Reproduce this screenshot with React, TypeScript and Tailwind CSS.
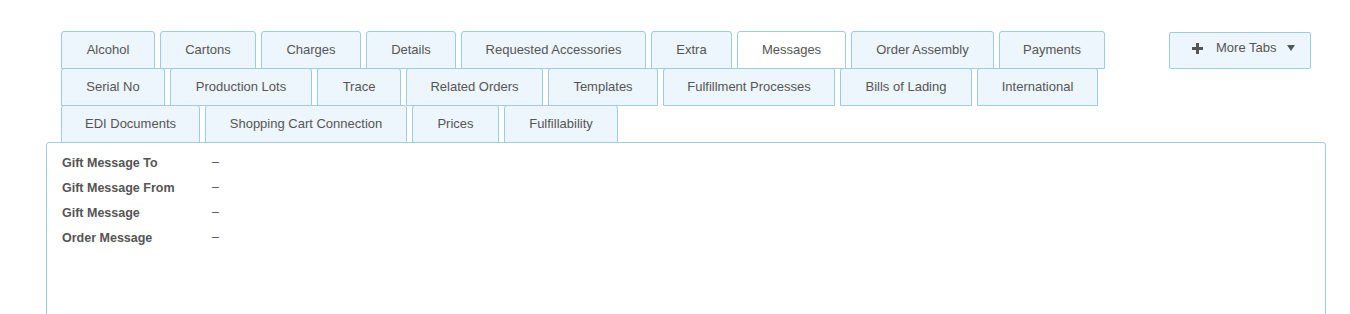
const rows: { label: string; w: string; active?: boolean }[] = [
  { label: "Alcohol", w: "w-[94px]" },
  { label: "Cartons", w: "w-[96px]" },
  { label: "Charges", w: "w-[100px]" },
  { label: "Details", w: "w-[90px]" },
  { label: "Requested Accessories", w: "w-[185px]" },
  { label: "Extra", w: "w-[81px]" },
  { label: "Messages", w: "w-[109px]", active: true },
  { label: "Order Assembly", w: "w-[143px]" },
  { label: "Payments", w: "w-[106px]" },
  { label: "Serial No", w: "w-[104px]" },
  { label: "Production Lots", w: "w-[142px]" },
  { label: "Trace", w: "w-[84px]" },
  { label: "Related Orders", w: "w-[137px]" },
  { label: "Templates", w: "w-[110px]" },
  { label: "Fulfillment Processes", w: "w-[172px]" },
  { label: "Bills of Lading", w: "w-[132px]" },
  { label: "International", w: "w-[121px]" },
  { label: "EDI Documents", w: "w-[139px]" },
  { label: "Shopping Cart Connection", w: "w-[202px]" },
  { label: "Prices", w: "w-[87px]" },
  { label: "Fulfillability", w: "w-[114px]" },
];

const fields = ["Gift Message To", "Gift Message From", "Gift Message", "Order Message"];

const App = () => {
  return (
    <div
      className="w-[1350px] h-[314px] overflow-hidden bg-white pl-[46px] pr-[24px] pt-[31px] text-[#555]"
      style={{ fontFamily: '"Liberation Sans", Arial, sans-serif' }}
    >
      <div className="flex items-start px-[15px]">
        <div className="flex flex-1 flex-wrap gap-x-[5px]">
          {rows.map((t) => (
            <div
              key={t.label}
              className={`${t.w} h-[38px] -mb-px flex items-center justify-center rounded-t-[3px] border border-[#9dcbe8] text-[13px] ${
                t.active ? "bg-white" : "bg-[#edf5fd]"
              }`}
            >
              {t.label}
            </div>
          ))}
        </div>
        <button className="mt-px w-[142px] h-[37px] flex items-start pt-[7px] pl-[22px] border border-[#9dcbe8] bg-[#edf5fd] rounded-[2px] text-[13px] text-[#555]">
          <svg width="11" height="11" viewBox="0 0 11 11" className="mt-[3px]">
            <rect x="4" y="0" width="3" height="11" fill="#555" />
            <rect x="0" y="4" width="11" height="3" fill="#555" />
          </svg>
          <span className="ml-[13px] leading-4">More Tabs</span>
          <svg width="8" height="6" viewBox="0 0 8 6" className="ml-[11px] mt-[5px]">
            <path d="M0 0 H8 L4 6 Z" fill="#555" />
          </svg>
        </button>
      </div>
      <div className="h-[200px] rounded-t-[3px] border border-[#9dcbe8] bg-white pl-[15px] pt-[8px]">
        {fields.map((f) => (
          <div key={f} className="h-[25px] flex items-center text-[12.5px]">
            <span className="w-[150px] font-bold">{f}</span>
            <span className="-mt-[2px]">–</span>
          </div>
        ))}
      </div>
    </div>
  );
};

export default App;
